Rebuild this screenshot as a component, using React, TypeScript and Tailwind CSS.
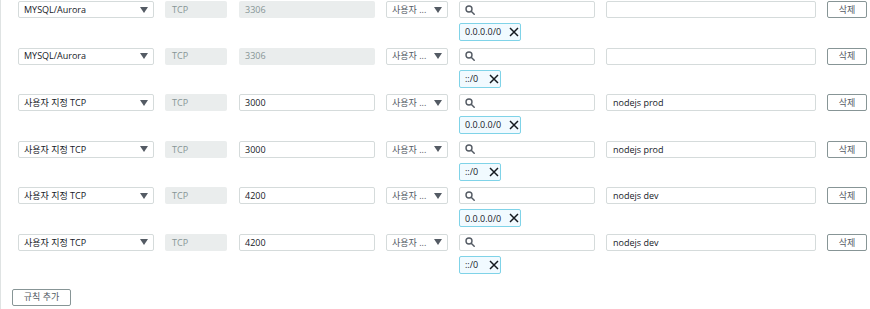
import React from "react";

const font = { fontFamily: '"Open Sans", "Noto Sans CJK KR", sans-serif' };

function Caret() {
  return (
    <svg width="8" height="6" viewBox="0 0 8 6" className="shrink-0">
      <path d="M0 0 L8 0 L4 6 Z" fill="#545b64" />
    </svg>
  );
}

function Search() {
  return (
    <svg width="10" height="10" viewBox="0 0 10 10" className="shrink-0">
      <circle cx="4" cy="4" r="3" fill="none" stroke="#545b64" strokeWidth="1.4" />
      <path d="M6.2 6.2 L9.2 9.2" stroke="#545b64" strokeWidth="1.5" strokeLinecap="round" />
    </svg>
  );
}

function Close() {
  return (
    <svg width="10" height="10" viewBox="0 0 10 10" className="shrink-0">
      <path d="M1 1 L9 9 M9 1 L1 9" stroke="#16191f" strokeWidth="1.5" />
    </svg>
  );
}

type Row = { type: string; port: string; editable: boolean; cidr: string; desc: string };

const rows: Row[] = [
  { type: "MYSQL/Aurora", port: "3306", editable: false, cidr: "0.0.0.0/0", desc: "" },
  { type: "MYSQL/Aurora", port: "3306", editable: false, cidr: "::/0", desc: "" },
  { type: "사용자 지정 TCP", port: "3000", editable: true, cidr: "0.0.0.0/0", desc: "nodejs prod" },
  { type: "사용자 지정 TCP", port: "3000", editable: true, cidr: "::/0", desc: "nodejs prod" },
  { type: "사용자 지정 TCP", port: "4200", editable: true, cidr: "0.0.0.0/0", desc: "nodejs dev" },
  { type: "사용자 지정 TCP", port: "4200", editable: true, cidr: "::/0", desc: "nodejs dev" },
];

export default function App() {
  return (
    <div
      className="w-[870px] h-[309px] bg-white border-l border-[#dfe3e3] text-[9px] text-[#16191f] overflow-hidden"
      style={font}
    >
      <div className="flex flex-col pt-px">
        {rows.map((r, i) => (
          <div key={i} className="flex flex-col h-[46.6px]">
            <div className="flex items-center h-[17px]">
              <div className="ml-[17px] w-[136px] h-[17px] border border-[#d5dbdb] rounded-[2px] flex items-center justify-between pl-[5px] pr-[5px]">
                <span>{r.type}</span>
                <Caret />
              </div>
              <div className="ml-[11px] w-[62px] h-[17px] bg-[#eaeded] rounded-[2px] flex items-center pl-[7px] text-[#879596]">
                TCP
              </div>
              <div
                className={
                  r.editable
                    ? "ml-[12px] w-[136px] h-[17px] border border-[#d5dbdb] rounded-[2px] flex items-center pl-[5px]"
                    : "ml-[12px] w-[136px] h-[17px] bg-[#eaeded] rounded-[2px] flex items-center pl-[6px] text-[#879596]"
                }
              >
                {r.port}
              </div>
              <div className="ml-[11px] w-[62px] h-[17px] border border-[#d5dbdb] rounded-[2px] flex items-center justify-between pl-[5px] pr-[5px] text-[#545b64]">
                <span>사용자 ...</span>
                <Caret />
              </div>
              <div className="ml-[11px] w-[136px] h-[17px] border border-[#d5dbdb] rounded-[2px] flex items-center pl-[5px]">
                <Search />
              </div>
              <div className="ml-[11px] w-[210px] h-[17px] border border-[#d5dbdb] rounded-[2px] flex items-center pl-[6px]">
                {r.desc}
              </div>
              <div className="ml-[11px] w-[40px] h-[17px] border border-[#879596] rounded-[2px] flex items-center justify-center text-[#545b64]">
                삭제
              </div>
            </div>
            <div className="flex mt-[5px] ml-[458px]">
              <div
                className={
                  (r.cidr === "::/0" ? "w-[42px]" : "w-[62px]") +
                  " h-[18px] border border-[#7fd3e8] bg-[#f1faff] rounded-[2px] flex items-center justify-between pl-[5px] pr-[1px]"
                }
              >
                <span>{r.cidr}</span>
                <Close />
              </div>
            </div>
          </div>
        ))}
      </div>
      <div className="mt-[8px] ml-[11px] w-[59px] h-[17px] border border-[#879596] rounded-[2px] flex items-center justify-center text-[#545b64]">
        규칙 추가
      </div>
    </div>
  );
}
